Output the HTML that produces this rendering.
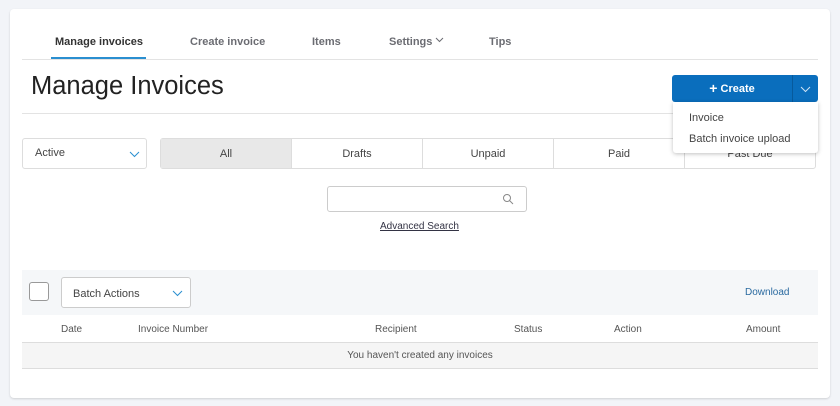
<!DOCTYPE html>
<html><head><style>
*{margin:0;padding:0;box-sizing:border-box}
body{width:840px;height:406px;background:#f2f4f8;font-family:"Liberation Sans",sans-serif;position:relative;overflow:hidden;color:#333}
.a{position:absolute}
.card{left:10px;top:9px;width:820px;height:389px;background:#fff;border-radius:4px;box-shadow:0 1px 2px rgba(0,0,0,.15)}
.nav{font-size:11px;font-weight:bold;color:#6b6c72;top:36px}
.t{font-size:11px;color:#444}
.h{font-size:10px;color:#555;top:324px}
</style></head><body>
<div class="a card"></div>
<div class="a nav" style="left:55px;color:#333">Manage invoices</div>
<div class="a" style="left:51px;top:57px;width:95px;height:2px;background:#2a8fd0"></div>
<div class="a nav" style="left:190px">Create invoice</div>
<div class="a nav" style="left:312px">Items</div>
<div class="a nav" style="left:389px">Settings <svg width="9" height="6" style="vertical-align:2px"><path d="M1 1l3.5 3.5L8 1" stroke="#6b6c72" fill="none"/></svg></div>
<div class="a nav" style="left:489px">Tips</div>
<div class="a" style="left:22px;top:59px;width:796px;height:1px;background:#e3e3e3"></div>
<div class="a" style="left:31px;top:72px;font-size:25.5px;color:#222">Manage Invoices</div>
<div class="a" style="left:22px;top:113px;width:796px;height:1px;background:#e3e3e3"></div>

<div class="a" style="left:22px;top:138px;width:125px;height:31px;border:1px solid #ddd;border-radius:3px"></div>
<div class="a t" style="left:35px;top:147px">Active</div>
<svg class="a" style="left:129px;top:151px" width="11" height="7"><path d="M1 1l4.5 4.5L10 1" stroke="#2a8fd0" fill="none"/></svg>

<div class="a" style="left:160px;top:138px;width:656px;height:31px;border:1px solid #ddd;border-radius:3px;display:flex;font-size:11px;color:#444">
<div style="flex:1;background:#e8e8e8;text-align:center;line-height:30px;border-right:1px solid #ddd">All</div>
<div style="flex:1;text-align:center;line-height:30px;border-right:1px solid #ddd">Drafts</div>
<div style="flex:1;text-align:center;line-height:30px;border-right:1px solid #ddd">Unpaid</div>
<div style="flex:1;text-align:center;line-height:30px;border-right:1px solid #ddd">Paid</div>
<div style="flex:1;text-align:center;line-height:30px">Past Due</div>
</div>

<div class="a" style="left:672px;top:75px;width:146px;height:27px;background:#0a6ebd;border-radius:3px"></div>
<div class="a" style="left:792px;top:75px;width:1px;height:27px;background:#075a9c"></div>
<div class="a" style="left:672px;top:80px;width:120px;text-align:center;color:#fff;font-size:11px;font-weight:bold"><span style="font-size:14px;vertical-align:-1px">+</span> Create</div>
<svg class="a" style="left:800px;top:86px" width="11" height="7"><path d="M1 1l4.5 4.5L10 1" stroke="#cfe3f5" fill="none"/></svg>
<div class="a" style="left:673px;top:102px;width:145px;height:51px;background:#fff;box-shadow:0 1px 4px rgba(0,0,0,.25);border-radius:0 0 3px 3px"></div>
<div class="a t" style="left:689px;top:112px">Invoice</div>
<div class="a t" style="left:689px;top:133px">Batch invoice upload</div>

<div class="a" style="left:327px;top:186px;width:200px;height:26px;border:1px solid #ccc;border-radius:3px"></div>
<svg class="a" style="left:502px;top:193px" width="12" height="12"><circle cx="5" cy="5" r="3.5" stroke="#888" fill="none"/><path d="M7.5 7.5L11 11" stroke="#888"/></svg>
<div class="a" style="left:380px;top:221px;font-size:10px;color:#334;text-decoration:underline">Advanced Search</div>

<div class="a" style="left:22px;top:270px;width:796px;height:45px;background:#f5f7f9"></div>
<div class="a" style="left:29px;top:282px;width:20px;height:19px;border:1px solid #999;border-radius:3px;background:#fff"></div>
<div class="a" style="left:61px;top:277px;width:130px;height:31px;border:1px solid #ccc;border-radius:3px;background:#fff"></div>
<div class="a t" style="left:73px;top:288px">Batch Actions</div>
<svg class="a" style="left:172px;top:290px" width="11" height="7"><path d="M1 1l4.5 4.5L10 1" stroke="#2a8fd0" fill="none"/></svg>
<div class="a" style="left:745px;top:287px;font-size:10px;color:#2a6aa0">Download</div>

<div class="a h" style="left:61px">Date</div>
<div class="a h" style="left:138px">Invoice Number</div>
<div class="a h" style="left:375px">Recipient</div>
<div class="a h" style="left:514px">Status</div>
<div class="a h" style="left:614px">Action</div>
<div class="a h" style="left:746px">Amount</div>
<div class="a" style="left:22px;top:342px;width:796px;height:27px;background:#f5f5f5;border-top:1px solid #ddd;border-bottom:1px solid #ddd"></div>
<div class="a" style="left:22px;top:350px;width:796px;text-align:center;font-size:10px;color:#555">You haven't created any invoices</div>
</body></html>
